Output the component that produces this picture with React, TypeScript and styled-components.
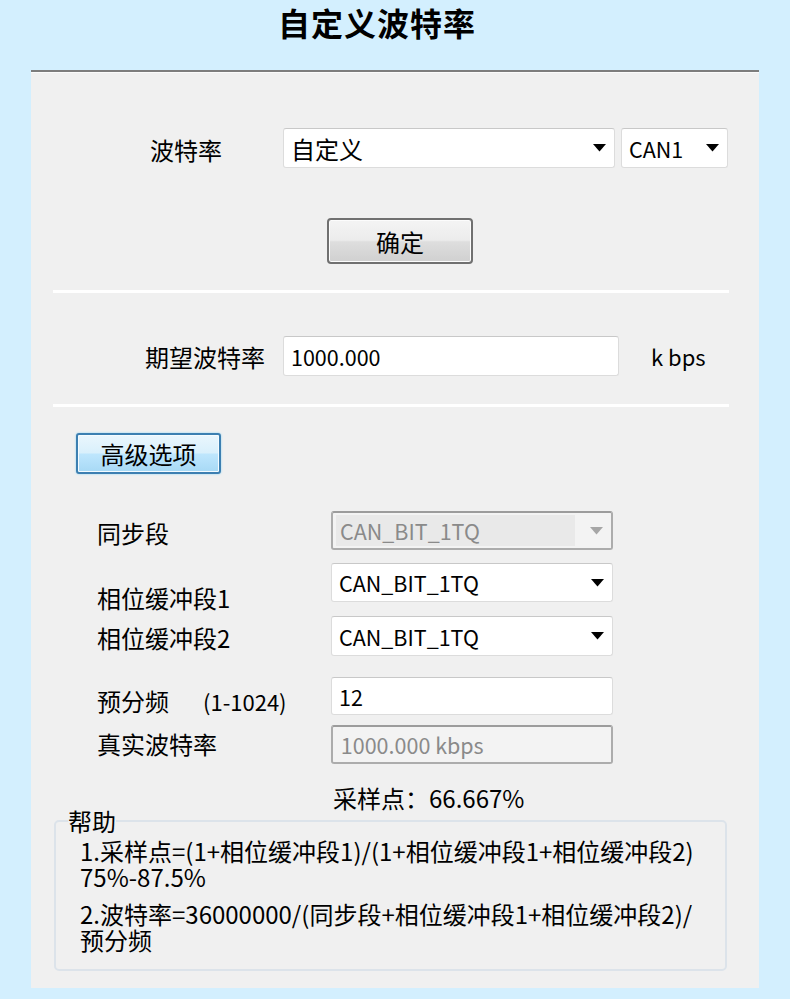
import React from 'react'
import styled, { createGlobalStyle } from 'styled-components'

const GlobalStyle = createGlobalStyle`
  html, body { margin: 0; padding: 0; }
  body {
    background: #d3effe;
    font-family: "Noto Sans CJK SC", "Liberation Sans", sans-serif;
    color: #000;
  }
`

const Page = styled.div`
  width: 790px;
  height: 999px;
  overflow: hidden;
`

const Title = styled.h1`
  margin: 0;
  height: 44px;
  line-height: 44px;
  padding-right: 36px;
  text-align: center;
  font-size: 32px;
  font-weight: 700;
  letter-spacing: 1px;
`

const Panel = styled.div`
  margin: 26px 31px 0 31px;
  width: 728px;
  background: #f0f0f0;
  border-top: 2px solid #7d7d7d;
  box-shadow: inset 0 1px 0 #fbfbfb;
  padding-bottom: 17px;
  display: flex;
  flex-direction: column;
  font-size: 24px;
`

const Row = styled.div<{ $top: number; $left: number; $h: number }>`
  display: flex;
  align-items: center;
  margin-top: ${p => p.$top}px;
  padding-left: ${p => p.$left}px;
  height: ${p => p.$h}px;
`

const Label = styled.span<{ $w: number; $drop?: number; $right?: boolean }>`
  flex: none;
  width: ${p => p.$w}px;
  margin-top: ${p => (p.$drop || 0) * 2}px;
  text-align: ${p => (p.$right ? 'right' : 'left')};
  line-height: 28px;
  white-space: nowrap;
`

const Range = styled.span`
  font-size: 22px;
  margin-left: 34px;
`

const Field = styled.div<{ $w: number; $disabled?: boolean }>`
  box-sizing: border-box;
  flex: none;
  width: ${p => p.$w}px;
  height: 100%;
  display: flex;
  align-items: center;
  padding: ${p => (p.$disabled ? '2px 8px 2px 3px' : '0 8px 0 7px')};
  background: ${p => (p.$disabled ? '#f3f3f3' : '#fff')};
  border: ${p => (p.$disabled ? '2px solid #acacac' : '1px solid #dcdcdc')};
  border-top-color: ${p => (p.$disabled ? '#9c9c9c' : '#c8c8c8')};
  border-radius: 3px;
  color: ${p => (p.$disabled ? '#8a8a8a' : '#000')};
  white-space: nowrap;
`

const FieldText = styled.span<{ $shaded?: boolean; $cjk?: boolean }>`
  flex: 1;
  align-self: stretch;
  display: flex;
  align-items: center;
  font-size: ${p => (p.$cjk ? '24px' : '21.5px')};
  padding-left: ${p => (p.$shaded ? '4px' : '0')};
  margin-right: ${p => (p.$shaded ? '15px' : '0')};
  background: ${p => (p.$shaded ? '#e9e9e9' : 'transparent')};
`

const Unit = styled.span`
  margin-left: 32px;
  font-size: 22px;
`

const Divider = styled.div<{ $top: number }>`
  margin: ${p => p.$top}px 30px 0 22px;
  height: 3px;
  background: #ffffff;
`

const ConfirmButton = styled.button`
  box-sizing: border-box;
  width: 146px;
  height: 46px;
  margin: 50px 0 0 296px;
  border: 2px solid #707070;
  border-radius: 4px;
  background: linear-gradient(#f4f4f4 0%, #ececec 48%, #dedede 52%, #d0d0d0 100%);
  box-shadow: inset 0 0 0 1px #fcfcfc;
  font-family: inherit;
  font-size: 24px;
  color: #000;
  padding: 0;
`

const AdvancedButton = styled.button`
  box-sizing: border-box;
  width: 145px;
  height: 41px;
  margin: 26px 0 0 45px;
  border: 2px solid #3c7fb1;
  border-radius: 3px;
  background: linear-gradient(#eaf6fd 0%, #d9f0fc 48%, #bee6fd 52%, #a7d9f5 100%);
  box-shadow: inset 0 0 0 1px #f4fbff, 0 0 2px #7fd0f5;
  font-family: inherit;
  font-size: 24px;
  color: #000;
  padding: 0;
`

const SampleLine = styled.div`
  margin: 22px 0 0 302px;
  line-height: 24px;
`

const HelpBox = styled.fieldset`
  margin: -2px 32px 0 23px;
  padding: 4px 12px 16px 12px;
  border: 2px solid #dce3ea;
  border-radius: 5px;
  min-width: 0;
`

const HelpTitle = styled.legend`
  padding: 0;
  line-height: 26px;
`

const HelpPara = styled.p<{ $top: number }>`
  margin: ${p => p.$top}px 0 0 12px;
  line-height: 26px;
`

function Arrow({ muted }: { muted?: boolean }) {
  return (
    <svg width="13" height="8" viewBox="0 0 13 8">
      <polygon points="0,0 13,0 6.5,7.5" fill={muted ? '#a6a6a6' : '#000'} />
    </svg>
  )
}

function Select({ w, value, disabled, cjk }: { w: number; value: string; disabled?: boolean; cjk?: boolean }) {
  return (
    <Field $w={w} $disabled={disabled}>
      <FieldText $shaded={disabled} $cjk={cjk}>{value}</FieldText>
      <Arrow muted={disabled} />
    </Field>
  )
}

export default function App() {
  return (
    <Page>
      <GlobalStyle />
      <Title>自定义波特率</Title>
      <Panel>
        <Row $top={56} $left={119} $h={40}>
          <Label $w={133} $drop={2}>波特率</Label>
          <Select w={332} value="自定义" cjk />
          <span style={{ width: 6 }} />
          <Select w={107} value="CAN1" />
        </Row>

        <ConfirmButton>确定</ConfirmButton>
        <Divider $top={26} />

        <Row $top={43} $left={0} $h={40}>
          <Label $w={234} $right $drop={1}>期望波特率</Label>
          <span style={{ width: 18 }} />
          <Field $w={336}>
            <FieldText>1000.000</FieldText>
          </Field>
          <Unit>k bps</Unit>
        </Row>

        <Divider $top={28} />
        <AdvancedButton>高级选项</AdvancedButton>

        <Row $top={37} $left={66} $h={39}>
          <Label $w={234} $drop={2}>同步段</Label>
          <Select w={282} value="CAN_BIT_1TQ" disabled />
        </Row>
        <Row $top={13} $left={66} $h={39}>
          <Label $w={234} $drop={15}>相位缓冲段1</Label>
          <Select w={282} value="CAN_BIT_1TQ" />
        </Row>
        <Row $top={14} $left={66} $h={40}>
          <Label $w={234} $drop={2}>相位缓冲段2</Label>
          <Select w={282} value="CAN_BIT_1TQ" />
        </Row>
        <Row $top={21} $left={66} $h={38}>
          <Label $w={234} $drop={5}>
            预分频<Range>(1-1024)</Range>
          </Label>
          <Field $w={282}>
            <FieldText>12</FieldText>
          </Field>
        </Row>
        <Row $top={10} $left={66} $h={39}>
          <Label $w={234} $drop={-1}>真实波特率</Label>
          <Field $w={282} $disabled>
            <FieldText>&nbsp;1000.000 kbps</FieldText>
          </Field>
        </Row>

        <SampleLine>采样点：66.667%</SampleLine>

        <HelpBox>
          <HelpTitle>帮助</HelpTitle>
          <HelpPara $top={0}>
            1.采样点=(1+相位缓冲段1)/(1+相位缓冲段1+相位缓冲段2)
            <br />
            75%-87.5%
          </HelpPara>
          <HelpPara $top={11}>
            2.波特率=36000000/(同步段+相位缓冲段1+相位缓冲段2)/
            <br />
            预分频
          </HelpPara>
        </HelpBox>
      </Panel>
    </Page>
  )
}
